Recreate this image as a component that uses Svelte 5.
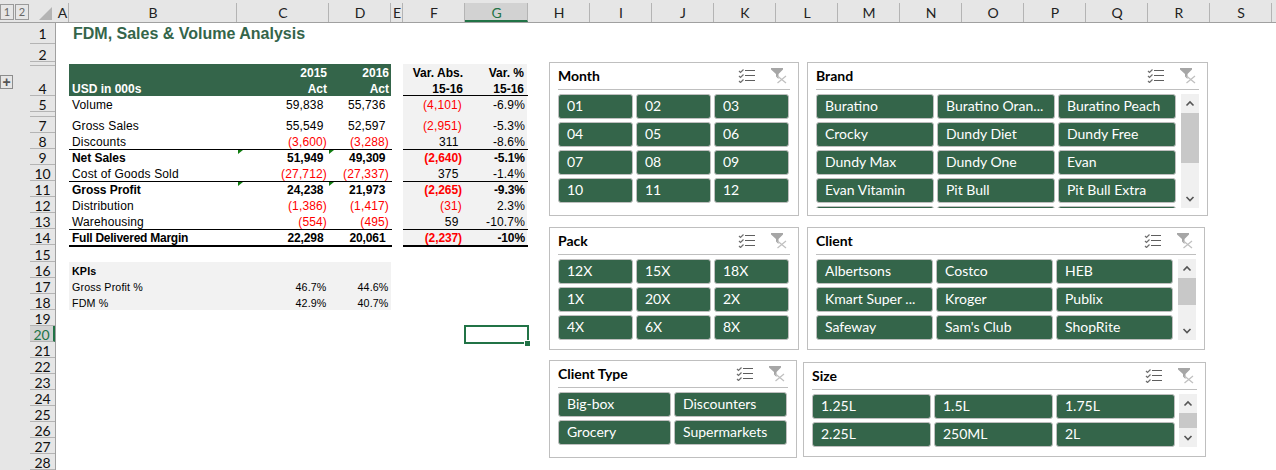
<script>
  const columns = [
    ['A', 13], ['B', 168], ['C', 92], ['D', 62], ['E', 12], ['F', 62], ['G', 63],
    ['H', 62], ['I', 62], ['J', 62], ['K', 62], ['L', 62], ['M', 62], ['N', 62],
    ['O', 62], ['P', 62], ['Q', 62], ['R', 62], ['S', 62]
  ]

  // label, height, top padding of the label
  const sheetRows = [
    ['1', 21, 2], ['2', 18, 2], ['', 4, 0], ['4', 30, 14], ['5', 16, 0], ['', 5, 0],
    ...[7, 8, 9, 10, 11, 12, 13, 14].map((n) => [String(n), 16, 0]),
    ['15', 17, 1],
    ...[16, 17, 18, 19, 20, 21, 22, 23, 24, 25, 26, 27, 28].map((n) => [String(n), 16, 0])
  ]

  const pnl = [
    { label: 'Volume', c: '59,838', d: '55,736', f: '(4,101)', g: '-6.9%', fr: true },
    { gap: true },
    { label: 'Gross Sales', c: '55,549', d: '52,597', f: '(2,951)', g: '-5.3%', fr: true },
    { label: 'Discounts', c: '(3,600)', d: '(3,288)', f: '311', g: '-8.6%', cr: true, dr: true },
    { label: 'Net Sales', c: '51,949', d: '49,309', f: '(2,640)', g: '-5.1%', fr: true, total: true, flag: true },
    { label: 'Cost of Goods Sold', c: '(27,712)', d: '(27,337)', f: '375', g: '-1.4%', cr: true, dr: true },
    { label: 'Gross Profit', c: '24,238', d: '21,973', f: '(2,265)', g: '-9.3%', fr: true, total: true, flag: true },
    { label: 'Distribution', c: '(1,386)', d: '(1,417)', f: '(31)', g: '2.3%', cr: true, dr: true, fr: true },
    { label: 'Warehousing', c: '(554)', d: '(495)', f: '59', g: '-10.7%', cr: true, dr: true },
    { label: 'Full Delivered Margin', c: '22,298', d: '20,061', f: '(2,237)', g: '-10%', fr: true, total: true, last: true }
  ]

  const isParen = (v) => v.startsWith('(')

  const slicers = [
    { name: 'Month', cls: 'month', items: ['01', '02', '03', '04', '05', '06', '07', '08', '09', '10', '11', '12'] },
    {
      name: 'Brand', cls: 'brand', thumb: 50,
      items: ['Buratino', 'Buratino Oran...', 'Buratino Peach', 'Crocky', 'Dundy Diet', 'Dundy Free', 'Dundy Max', 'Dundy One', 'Evan', 'Evan Vitamin', 'Pit Bull', 'Pit Bull Extra', '', '', '']
    },
    { name: 'Pack', cls: 'pack', items: ['12X', '15X', '18X', '1X', '20X', '2X', '4X', '6X', '8X'] },
    {
      name: 'Client', cls: 'client', thumb: 27,
      items: ['Albertsons', 'Costco', 'HEB', 'Kmart Super ...', 'Kroger', 'Publix', 'Safeway', "Sam's Club", 'ShopRite']
    },
    { name: 'Client Type', cls: 'ctype', items: ['Big-box', 'Discounters', 'Grocery', 'Supermarkets'] },
    { name: 'Size', cls: 'size', thumb: 15, items: ['1.25L', '1.5L', '1.75L', '2.25L', '250ML', '2L'] }
  ]
</script>

<div class="app">
  <header class="colhead">
    <div class="levels">
      <span class="level">1</span><span class="level">2</span>
    </div>
    <div class="corner"><span class="tri"></span></div>
    {#each columns as [name, width]}
      <div class="col" class:on={name === 'G'} style="width: {width}px">{name}</div>
    {/each}
  </header>

  <div class="main">
    <aside class="outline"><span class="plus">+</span></aside>
    <nav class="rowhead">
      {#each sheetRows as [n, h, pad]}
        <div class="rownum" class:on={n === '20'} style="height: {h}px; padding-top: {pad}px">{n}</div>
      {/each}
    </nav>

    <section class="sheet">
      <h1>FDM, Sales &amp; Volume Analysis</h1>

      <div class="tables">
        <div class="left">
          <div class="band">
            <div class="hl">USD in 000s</div>
            <div class="hn">2015<br />Act</div>
            <div class="hn">2016<br />Act</div>
          </div>
          {#each pnl as r}
            {#if r.gap}
              <div class="gap"></div>
            {:else}
              <div class="row" class:total={r.total} class:last={r.last}>
                <div class="lab">{r.label}</div>
                <div class="num" class:red={r.cr} class:flag={r.flag} class:par={isParen(r.c)}>{r.c}</div>
                <div class="num" class:red={r.dr} class:flag={r.flag} class:par={isParen(r.d)}>{r.d}</div>
              </div>
            {/if}
          {/each}

          <div class="kpis">
            <div class="kpi head">KPIs</div>
            <div class="kpi"><span>Gross Profit %</span><span class="kv">46.7%</span><span class="kv">44.6%</span></div>
            <div class="kpi"><span>FDM %</span><span class="kv">42.9%</span><span class="kv">40.7%</span></div>
          </div>
        </div>

        <div class="right">
          <div class="vhead">
            <div class="vn f">Var. Abs.<br />15-16</div>
            <div class="vn">Var. %<br />15-16</div>
          </div>
          {#each pnl as r}
            {#if r.gap}
              <div class="gap"></div>
            {:else}
              <div class="row" class:total={r.total} class:last={r.last}>
                <div class="num" class:red={r.fr} class:par={isParen(r.f)}>{r.f}</div>
                <div class="num par">{r.g}</div>
              </div>
            {/if}
          {/each}
        </div>
      </div>

      <div class="selected"></div>

      {#each slicers as s}
        <div class="slicer {s.cls}">
          <div class="shead">
            <span class="stitle">{s.name}</span>
            <svg class="ico" width="18" height="14" viewBox="0 0 18 14" fill="none">
              <path d="M1 2l1.500 1.500L5.500 0.500M1 7l1.500 1.500L5.500 5.500M1 12l1.500 1.500L5.500 10.500" stroke="#6e6e6e" stroke-width="1.200" />
              <path d="M7 1.500h10M7 6.500h10M7 11.500h10" stroke="#5e5e5e" stroke-width="1" />
            </svg>
            <svg class="ico clear" width="16" height="16" viewBox="0 0 16 16" fill="none">
              <path d="M0 0h12v1.500L7.500 6v5L5 8.500V6L0 1.500z" fill="#a6a6a6" />
              <path d="M6.500 8l8.500 7M15 8l-8.500 7" stroke="#c0c0c0" stroke-width="1.300" />
            </svg>
          </div>
          <div class="sbody">
            <div class="buttons">
              {#each s.items as item}
                <div class="btn">{item}</div>
              {/each}
            </div>
            {#if s.thumb}
              <div class="scroll">
                <svg class="arrow" width="18" height="19" viewBox="0 0 18 19" fill="none">
                  <path d="M5.500 11.500L9 8l3.500 3.500" stroke="#555" stroke-width="1.600" />
                </svg>
                <div class="thumb" style="height: {s.thumb}px"></div>
                <svg class="arrow down" width="18" height="19" viewBox="0 0 18 19" fill="none">
                  <path d="M5.500 8L9 11.500 12.500 8" stroke="#555" stroke-width="1.600" />
                </svg>
              </div>
            {/if}
          </div>
        </div>
      {/each}
    </section>
  </div>
</div>

<style>
  :global(body) {
    margin: 0;
    background: #fff;
  }

  .app {
    width: 1276px;
    height: 470px;
    overflow: hidden;
    font-family: "Liberation Sans", Arial, sans-serif;
    color: #000;
  }

  /* column headers */
  .colhead {
    display: flex;
    height: 23px;
    box-sizing: border-box;
    background: #e6e6e6;
    border-bottom: 1px solid #a0a0a0;
    padding-top: 3px;
    font-family: Lato, sans-serif;
    font-size: 14px;
  }

  .levels {
    display: flex;
    width: 30px;
    flex: none;
    gap: 1px;
    align-items: flex-start;
  }

  .level {
    width: 12px;
    height: 14px;
    margin-top: 1px;
    border: 1px solid #9a9a9a;
    font-size: 11px;
    line-height: 14px;
    text-align: center;
    color: #666;
  }

  .corner {
    position: relative;
    width: 26px;
    flex: none;
  }

  .tri {
    position: absolute;
    right: 4px;
    bottom: 2px;
    border-style: solid;
    border-width: 0 0 13px 13px;
    border-color: transparent transparent #b4b4b4 transparent;
  }

  .col {
    flex: none;
    box-sizing: border-box;
    border-right: 1px solid #b4b4b4;
    padding-left: 1px;
    text-align: center;
    line-height: 20px;
    color: #222;
  }

  .col.on {
    background: #d2d2d2;
    color: #217346;
    border-bottom: 2px solid #217346;
    height: 19px;
  }

  /* row headers */
  .main {
    display: flex;
    height: 447px;
  }

  .outline {
    position: relative;
    width: 30px;
    flex: none;
    background: #e6e6e6;
  }

  .plus {
    position: absolute;
    left: 0;
    top: 52px;
    width: 11px;
    height: 12px;
    border: 1px solid #8c8c8c;
    font: bold 14px/12px "Liberation Sans", sans-serif;
    text-align: center;
    color: #555;
  }

  .rowhead {
    width: 26px;
    flex: none;
    box-sizing: border-box;
    background: #e6e6e6;
    border-right: 1px solid #a0a0a0;
    font-family: Lato, sans-serif;
    font-size: 14px;
  }

  .rownum {
    box-sizing: border-box;
    border-bottom: 1px solid #b4b4b4;
    text-align: center;
    overflow: hidden;
    line-height: 18px;
    color: #111;
  }

  .rownum.on {
    background: #d2d2d2;
    color: #217346;
    border-right: 2px solid #217346;
  }

  /* sheet */
  .sheet {
    position: relative;
    flex: 1;
    padding-left: 13px;
  }

  h1 {
    margin: 0 0 0 4px;
    height: 41px;
    font-size: 16px;
    line-height: 21px;
    font-weight: 700;
    color: #34654a;
  }

  .tables {
    display: flex;
    gap: 12px;
    font-size: 12px;
    letter-spacing: 0.15px;
  }

  .left {
    width: 322px;
  }

  .right {
    width: 124px;
    height: 182px;
    background: #f2f2f2;
  }

  .band {
    display: grid;
    grid-template-columns: 169px 91px 62px;
    height: 32px;
    box-sizing: border-box;
    padding-top: 1px;
    background: #34654a;
    color: #fff;
    font-weight: 700;
    line-height: 16px;
    letter-spacing: 0;
  }

  .hl {
    align-self: end;
    padding-left: 3px;
  }

  .hn {
    text-align: right;
    padding-right: 2px;
  }

  .gap {
    height: 5px;
  }

  .row {
    display: grid;
    height: 16px;
    line-height: 18px;
    box-sizing: border-box;
  }

  .left .row {
    grid-template-columns: 169px 91px 62px;
    width: 323px;
  }

  .right .row {
    grid-template-columns: 61px 63px;
    width: 125px;
  }

  .row.total {
    font-weight: 700;
    border-top: 1px solid #000;
    line-height: 17px;
    letter-spacing: -0.05px;
  }

  .row.last {
    height: 18px;
    border-bottom: 2px solid #000;
    letter-spacing: -0.1px;
  }

  .left .row.last .lab {
    letter-spacing: -0.25px;
  }

  .lab {
    padding-left: 3px;
  }

  .num {
    position: relative;
    text-align: right;
    padding-right: 5.500px;
  }

  .num.par {
    padding-right: 2px;
  }

  .red {
    color: #ff0000;
  }

  .flag::before {
    content: "";
    position: absolute;
    left: 0;
    top: 0;
    border-style: solid;
    border-width: 4px 5px 0 0;
    border-color: #107c10 transparent transparent transparent;
  }

  .vhead {
    display: grid;
    grid-template-columns: 61px 63px;
    height: 32px;
    padding-top: 1px;
    font-weight: 700;
    line-height: 16px;
    letter-spacing: 0;
    border-bottom: 1px solid #000;
    box-sizing: border-box;
    width: 125px;
  }

  .vn {
    text-align: right;
    padding-right: 3px;
  }

  .vn.f {
    padding-right: 1px;
  }

  .kpis {
    margin-top: 15px;
    height: 48px;
    background: #f2f2f2;
    font-size: 10.700px;
    letter-spacing: 0.15px;
  }

  .kpi {
    display: grid;
    grid-template-columns: 166px 91px 62px;
    height: 16px;
    line-height: 18px;
    padding-left: 3px;
    box-sizing: border-box;
  }

  .kpi.head {
    font-weight: 700;
  }

  .kv {
    text-align: right;
    padding-right: 2.500px;
  }

  .selected {
    position: absolute;
    left: 408px;
    top: 302px;
    width: 61px;
    height: 15px;
    border: 2px solid #217346;
  }

  .selected::after {
    content: "";
    position: absolute;
    right: -3px;
    bottom: -4px;
    width: 5px;
    height: 5px;
    background: #217346;
    border: 1px solid #fff;
    border-width: 1px 0 0 1px;
  }

  /* slicers */
  .slicer {
    position: absolute;
    box-sizing: border-box;
    background: #fff;
    border: 1px solid #bfbfbf;
    padding: 0 8px;
    font-family: Lato, sans-serif;
  }

  .month { left: 493px; top: 39px; width: 250px; height: 154px; }
  .brand { left: 751px; top: 39px; width: 401px; height: 154px; }
  .pack { left: 493px; top: 204px; width: 250px; height: 123px; }
  .client { left: 751px; top: 204px; width: 398px; height: 123px; }
  .ctype { left: 493px; top: 337px; width: 248px; height: 98px; }
  .size { left: 747px; top: 339px; width: 403px; height: 95px; }

  .shead {
    display: flex;
    align-items: center;
    height: 27px;
    box-sizing: border-box;
    border-bottom: 1px solid #bfbfbf;
    gap: 15px;
    padding-right: 3px;
    margin-bottom: 4px;
  }

  .stitle {
    flex: 1;
    font-size: 14px;
    line-height: 24px;
    font-weight: 700;
    color: #000;
  }

  .ico {
    flex: none;
  }

  .sbody {
    display: flex;
    justify-content: space-between;
  }

  .buttons {
    display: grid;
    gap: 3px;
    grid-auto-rows: 25px;
    overflow: hidden;
  }

  .month .buttons, .pack .buttons { grid-template-columns: repeat(3, 75px); }
  .brand .buttons { grid-template-columns: repeat(3, 118px); height: 114px; }
  .client .buttons { grid-template-columns: repeat(3, 117px); height: 81px; }
  .ctype .buttons { grid-template-columns: repeat(2, 113px); }
  .size .buttons { grid-template-columns: repeat(3, 119px); height: 53px; }

  .btn {
    box-sizing: border-box;
    border: 1px solid #bfbfbf;
    border-radius: 3px;
    background: #34654a;
    color: #fff;
    font-size: 14px;
    line-height: 21px;
    padding-left: 8px;
    white-space: nowrap;
    overflow: hidden;
  }

  .scroll {
    display: flex;
    flex-direction: column;
    width: 18px;
    background: #f0f0f0;
  }

  .arrow {
    flex: none;
  }

  .arrow.down {
    margin-top: auto;
  }

  .thumb {
    background: #c8c8c8;
    flex: none;
  }
</style>
